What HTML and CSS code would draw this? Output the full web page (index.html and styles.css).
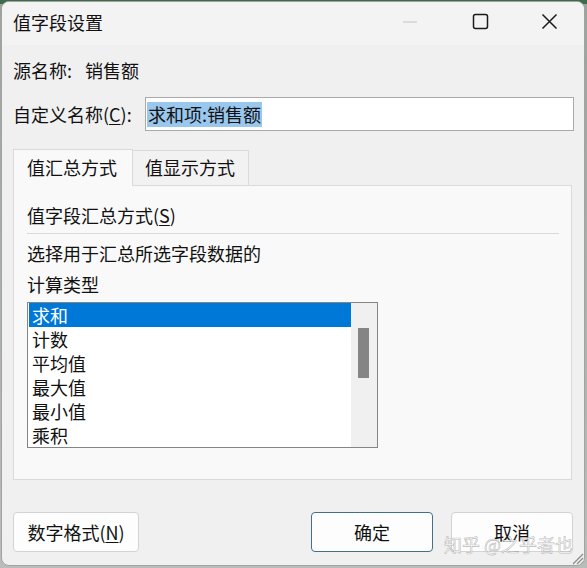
FILE: index.html
```html
<!DOCTYPE html>
<html lang="zh-CN">
<head>
<meta charset="utf-8">
<title>值字段设置</title>
<link rel="stylesheet" href="styles.css">
</head>
<body>
<div class="dialog">
  <div class="titlebar">
    <span class="title">值字段设置</span>
    <div class="controls">
      <span class="ctl"><svg width="16" height="16" viewBox="0 0 16 16"><line x1="1" y1="8" x2="15" y2="8" stroke="#c4c4c4" stroke-width="1.2"/></svg></span>
      <span class="ctl"><svg width="17" height="17" viewBox="0 0 17 17"><rect x="1.5" y="1.5" width="14" height="14" rx="2" fill="none" stroke="#1a1a1a" stroke-width="1.5"/></svg></span>
      <span class="ctl"><svg width="17" height="17" viewBox="0 0 17 17"><path d="M1.5 1.5 L15.5 15.5 M15.5 1.5 L1.5 15.5" stroke="#1a1a1a" stroke-width="1.5"/></svg></span>
    </div>
  </div>
  <div class="content">
    <div class="row-source"><span>源名称:</span><span class="src-val">销售额</span></div>
    <div class="row-custom">
      <label class="lbl">自定义名称(<u>C</u>):</label>
      <div class="input"><span class="sel">求和项:销售额</span></div>
    </div>
    <div class="tabs">
      <div class="tab active">值汇总方式</div>
      <div class="tab">值显示方式</div>
    </div>
    <div class="panel">
      <div class="group-title">值字段汇总方式(<u>S</u>)</div>
      <div class="sep"></div>
      <p class="desc">选择用于汇总所选字段数据的<br>计算类型</p>
      <div class="listbox">
        <ul class="items">
          <li class="selected">求和</li>
          <li>计数</li>
          <li>平均值</li>
          <li>最大值</li>
          <li>最小值</li>
          <li>乘积</li>
        </ul>
        <div class="scroll"><div class="thumb"></div></div>
      </div>
    </div>
    <div class="buttons">
      <button class="btn fmt">数字格式(<u>N</u>)</button>
      <div class="spacer"></div>
      <button class="btn ok">确定</button>
      <button class="btn cancel">取消</button>
    </div>
  </div>
  <svg class="grip" width="14" height="14" viewBox="0 0 14 14"><path d="M13 3 L3 13 M13 7 L7 13 M13 11 L11 13" stroke="#8a8a8a" stroke-width="1.2"/></svg>
  <div class="watermark">知乎 @之乎者也</div>
</div>
</body>
</html>
```

FILE: styles.css
```css
* { box-sizing: border-box; }
html, body { margin: 0; padding: 0; }
body {
  width: 587px;
  height: 568px;
  overflow: hidden;
  background: linear-gradient(#3f6b4a 0, #3f6b4a 4px, #9aa39c 4px, #b9bdb9 100%);
  font-family: "Noto Sans CJK SC", "Microsoft YaHei", sans-serif;
  font-size: 18px;
  color: #111;
}
u { text-decoration: underline; text-underline-offset: 2px; text-decoration-thickness: 1px; }
.dialog {
  position: relative;
  margin: 1px 0 0 1px;
  width: 584px;
  height: 565px;
  border: 1px solid #a3a3a3;
  border-radius: 8px;
  background: #f0f0f0;
  overflow: hidden;
}
.titlebar {
  height: 43px;
  background: #f3f3f3;
  display: flex;
  align-items: center;
  padding-left: 11px;
}
.title { flex: 1; line-height: 24px; margin-top: -3px; }
.controls { display: flex; height: 43px; }
.ctl {
  width: 69px;
  height: 43px;
  display: flex;
  align-items: center;
  justify-content: center;
  margin-top: -2px;
}
.ctl:first-child { margin-left: -2px; margin-right: 2px; }
.content { padding: 0 10px 0 11px; }
.row-source {
  margin-top: 13px;
  height: 24px;
  line-height: 24px;
  display: flex;
}
.src-val { margin-left: 13px; }
.row-custom {
  margin-top: 15px;
  height: 34px;
  display: flex;
  align-items: center;
}
.lbl { width: 132px; line-height: 24px; }
.input {
  width: 429px;
  height: 34px;
  background: #fff;
  border: 1px solid #a9a9a9;
  padding: 3px 0 0 1px;
}
.sel {
  display: inline-block;
  background: #9ac7ee;
  line-height: 25px;
  padding: 0 1px;
}
.tabs {
  margin-top: 18px;
  height: 36px;
  display: flex;
  align-items: flex-end;
}
.tab {
  height: 35px;
  line-height: 33px;
  border: 1px solid #dadada;
  border-bottom: none;
}
.tab.active {
  width: 120px;
  height: 37px;
  line-height: 35px;
  background: #f9f9f9;
  padding-left: 13px;
  margin-bottom: -1px;
  position: relative;
  z-index: 1;
}
.tab:not(.active) {
  width: 116px;
  background: #f2f2f2;
  border-left: none;
  padding-left: 12px;
}
.panel {
  width: 559px;
  height: 295px;
  background: #f9f9f9;
  border: 1px solid #dadada;
  padding: 17px 12px 0 13px;
}
.group-title { height: 24px; line-height: 24px; }
.sep { margin-top: 6px; height: 1px; background: #d9d9d9; }
.desc { margin: 4px 0 0; line-height: 31px; }
.listbox {
  margin-top: 2px;
  width: 351px;
  height: 146px;
  border: 1px solid #858585;
  background: #fff;
  display: flex;
}
.items {
  list-style: none;
  margin: 0;
  padding: 0 0 0 1px;
  width: 323px;
}
.items li {
  height: 24px;
  line-height: 24px;
  padding-left: 3px;
}
.items li.selected { background: #0078d7; color: #fff; }
.scroll {
  width: 26px;
  background: #f0f0f0;
  padding: 25px 0 0 7px;
}
.thumb { width: 11px; height: 50px; background: #858585; }
.buttons {
  margin-top: 32px;
  height: 40px;
  display: flex;
}
.spacer { flex: 1; }
.btn {
  font-family: inherit;
  font-size: 18px;
  color: #111;
  height: 40px;
  background: #fdfdfd;
  border: 1px solid #d3d3d3;
  border-radius: 4px;
  padding: 0;
  line-height: 24px;
}
.btn.fmt { width: 126px; }
.btn.ok { width: 122px; border-color: #42708a; }
.btn.cancel { width: 122px; margin-left: 18px; margin-right: 1px; }
.grip { position: absolute; right: 0; bottom: 0; }
.watermark {
  position: absolute;
  left: 442px;
  top: 529px;
  font-size: 18px;
  line-height: 26px;
  color: rgba(255, 255, 255, 0.85);
  -webkit-text-stroke: 0.6px rgba(130, 130, 130, 0.55);
  white-space: nowrap;
  pointer-events: none;
}
```
